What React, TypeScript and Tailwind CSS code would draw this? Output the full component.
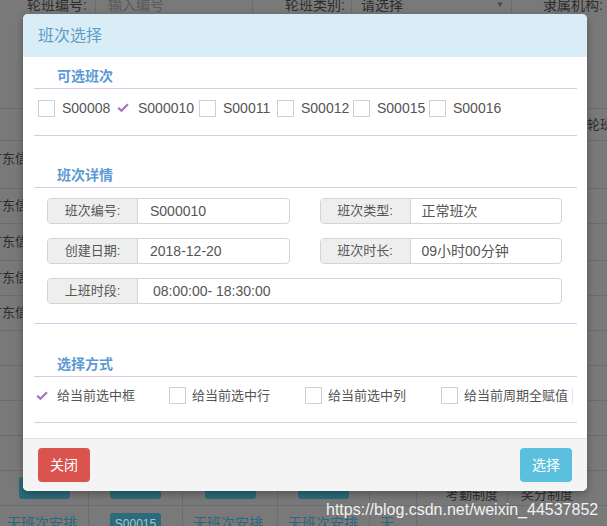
import React from 'react';

const FONT = "font-['Liberation_Sans','Noto_Sans_CJK_SC',sans-serif]";

function Check() {
  return (
    <svg width="12" height="10" viewBox="0 0 12 10" className="shrink-0">
      <path d="M0.4 5.6 L2 4 L4.4 6.3 L10.2 0.4 L11.7 1.9 L4.4 9.2 Z" fill="#a96fc1" />
    </svg>
  );
}

function Box() {
  return <span className="block h-[17px] w-[17px] shrink-0 border border-[#cfcfcf] bg-white" />;
}

function Field({ label, value, valuePad = 'pl-[12px]' }: { label: string; value: string; valuePad?: string }) {
  return (
    <div className="flex h-[26px] overflow-hidden rounded-[4px] border border-[#d4d4d4]">
      <div className="flex w-[90px] shrink-0 items-center justify-center border-r border-[#d4d4d4] bg-[#eeeeee] text-[13px] text-[#555]">
        {label}
      </div>
      <div className={`flex items-center text-[14px] text-[#555] ${valuePad}`}>{value}</div>
    </div>
  );
}

function SectionTitle({ children }: { children: React.ReactNode }) {
  return (
    <>
      <div className="h-[24px] pl-[23px] text-[14px] font-bold leading-[24px] text-[#5b9ad2]">{children}</div>
      <div className="h-px bg-[#dcc7e9]" />
    </>
  );
}

const shifts = [
  { code: 'S00008', checked: false, w: 'w-[79px]' },
  { code: 'S000010', checked: true, w: 'w-[82px]' },
  { code: 'S00011', checked: false, w: 'w-[78px]' },
  { code: 'S00012', checked: false, w: 'w-[76px]' },
  { code: 'S00015', checked: false, w: 'w-[76px]' },
  { code: 'S00016', checked: false, w: 'w-auto' },
];

const modes = [
  { text: '给当前选中框', checked: true, w: 'w-[133px]' },
  { text: '给当前选中行', checked: false, w: 'w-[136px]' },
  { text: '给当前选中列', checked: false, w: 'w-[136px]' },
  { text: '给当前周期全赋值', checked: false, w: 'w-auto' },
];

const rowHeights = ['h-[35px]', 'h-[37px]', 'h-[35px]', 'h-[35px]', 'h-[35px]', 'h-[35px]', 'h-[35px]', 'h-[35px]'];

function Background() {
  return (
    <div className="text-[14px] text-[#2c2c2c]">
      {/* search bar of the page behind */}
      <div className="-mt-[10px] flex h-[30px] items-center whitespace-nowrap">
        <span className="ml-[27px] w-[68px]">轮班编号:</span>
        <div className="flex h-full w-[158px] items-center border-x border-[#6c6c6c] pl-[12px] text-[#5a5a5a]">输入编号</div>
        <span className="ml-[32px] w-[66px]">轮班类别:</span>
        <div className="flex h-full w-[161px] items-center border-x border-[#6c6c6c] pl-[9px]">
          请选择
          <span className="ml-auto mr-[7px] text-[8px] text-[#444]">▼</span>
        </div>
        <span className="ml-[31px]">隶属机构:</span>
      </div>
      <div className="h-[88px]" />
      <div className="flex h-[32px] items-center whitespace-nowrap border-t border-[#6c6c6c] pl-[587px] text-[13px]">轮班制度</div>
      <div className="flex h-[48px] items-start whitespace-nowrap border-t border-[#6c6c6c] pt-[8px] text-[13px]">
        <span className="-ml-[11px]">广东信息</span>
      </div>
      {rowHeights.map((h, i) => (
        <div key={i} className={`flex ${h} items-center whitespace-nowrap border-t border-[#6c6c6c] text-[13px]`}>
          {i < 4 && <span className="-ml-[11px]">广东信息</span>}
        </div>
      ))}
      <div className="flex h-[35px] border-t border-[#6c6c6c] text-[13px]">
        {['w-[89px]', 'w-[94px]', 'w-[95px]', 'w-[92px]'].map((w, i) => (
          <div key={i} className={`flex ${w} items-center justify-center border-r border-[#6c6c6c]`}>
            <span className="h-[22px] w-[51px] rounded-[3px] bg-[#2b6b7c]" />
          </div>
        ))}
        <div className="w-[47px] border-r border-[#6c6c6c]" />
        <div className="flex w-[91px] items-center border-r border-[#6c6c6c] pl-[29px] pt-[14px]">考勤制度</div>
        <div className="flex items-center pl-[13px] pt-[14px]">奖分制度</div>
      </div>
      <div className="flex h-[35px] border-t border-[#6c6c6c] text-[14px] text-[#2a6680]">
        <div className="w-[89px] whitespace-nowrap border-r border-[#6c6c6c] pl-[7px] pt-[7px]">无班次安排</div>
        <div className="flex w-[94px] justify-center border-r border-[#6c6c6c] pt-[7px]">
          <span className="h-[22px] w-[51px] rounded-[3px] bg-[#2b6b7c] text-center text-[12px] leading-[22px] text-[#a9c4cc]">S00015</span>
        </div>
        <div className="w-[95px] whitespace-nowrap border-r border-[#6c6c6c] pl-[10px] pt-[7px]">无班次安排</div>
        <div className="w-[92px] whitespace-nowrap border-r border-[#6c6c6c] pl-[10px] pt-[7px]">无班次安排</div>
        <div className="w-[47px] border-r border-[#6c6c6c] pl-[10px] pt-[7px]">无</div>
      </div>
    </div>
  );
}

export default function App() {
  return (
    <div className={`relative h-[526px] w-[607px] overflow-hidden bg-[#797979] ${FONT}`}>
      <Background />

      {/* modal */}
      <div className="absolute left-[23px] top-[14px] w-[564px] overflow-hidden rounded-[5px] bg-white shadow-[0_3px_9px_rgba(0,0,0,0.3)]">
        <div className="flex h-[43px] items-center bg-[#d9edf7] pl-[15px] text-[16px] text-[#5f9dc6]">班次选择</div>

        <div className="pb-[15px] pl-[11px] pr-[10px] pt-[7px]">
          <SectionTitle>可选班次</SectionTitle>
          <div className="flex h-[38px] items-center pl-[4px] text-[14px] text-[#555]">
            {shifts.map((s) => (
              <div key={s.code} className={`flex items-center ${s.w} ${s.checked ? 'gap-[9px]' : 'gap-[7px]'}`}>
                {s.checked ? <Check /> : <Box />}
                <span>{s.code}</span>
              </div>
            ))}
          </div>
          <div className="mt-[8px] h-px bg-[#dcc7e9]" />

          <div className="mt-[27px]">
            <SectionTitle>班次详情</SectionTitle>
          </div>
          <div className="mt-[10px] grid grid-cols-2 gap-x-[30px] gap-y-[14px] pl-[13px] pr-[15px]">
            <Field label="班次编号:" value="S000010" />
            <Field label="班次类型:" value="正常班次" valuePad="pl-[11px]" />
            <Field label="创建日期:" value="2018-12-20" />
            <Field label="班次时长:" value="09小时00分钟" valuePad="pl-[11px]" />
            <div className="col-span-2">
              <Field label="上班时段:" value="08:00:00- 18:30:00" valuePad="pl-[15px]" />
            </div>
          </div>
          <div className="mt-[19px] h-px bg-[#dcc7e9]" />

          <div className="mt-[28px]">
            <SectionTitle>选择方式</SectionTitle>
          </div>
          <div className="flex h-[37px] items-center pl-[2px] text-[13px] text-[#555]">
            {modes.map((m) => (
              <div key={m.text} className={`flex items-center ${m.w} ${m.checked ? 'gap-[9px]' : 'gap-[6px]'}`}>
                {m.checked ? <Check /> : <Box />}
                <span className="whitespace-nowrap">{m.text}</span>
              </div>
            ))}
            <span className="ml-[4px] h-[16px] w-px bg-[#dde6ee]" />
          </div>
          <div className="mt-[8px] h-px bg-[#dcc7e9]" />
        </div>

        <div className="flex justify-between border-t border-[#e3e3e3] bg-[#f4f4f4] px-[15px] py-[9px]">
          <button className="h-[34px] w-[52px] rounded-[4px] bg-[#d9534f] text-[14px] text-white">关闭</button>
          <button className="h-[34px] w-[52px] rounded-[4px] bg-[#5bc0de] text-[14px] text-white">选择</button>
        </div>
      </div>

      {/* watermark */}
      <div className="absolute left-[326px] top-[498px] font-['Liberation_Sans',sans-serif] text-[16px] text-white/90">
        https://blog.csdn.net/weixin_44537852
      </div>
    </div>
  );
}
